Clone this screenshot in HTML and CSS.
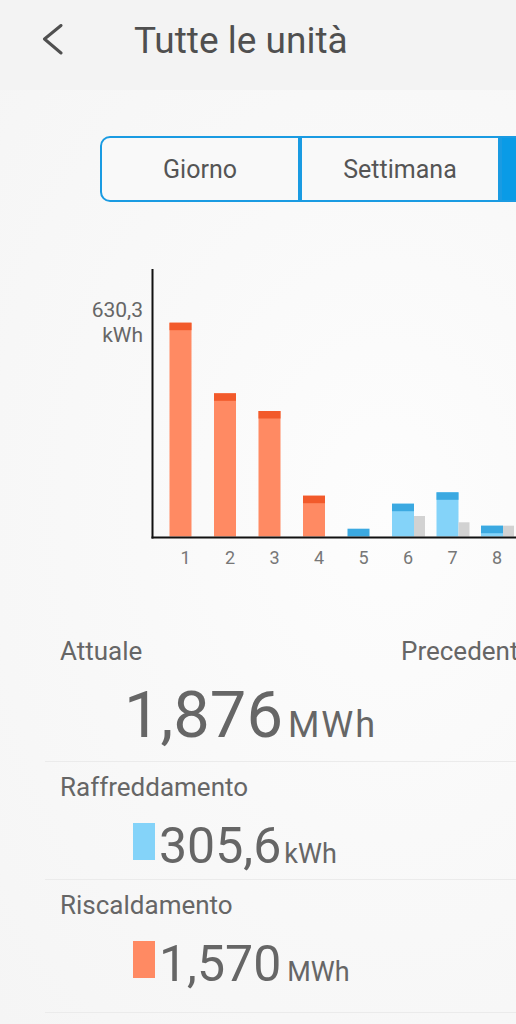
FILE: index.html
```html
<!DOCTYPE html>
<html lang="it">
<head>
  <meta charset="UTF-8" />
  <meta name="viewport" content="width=device-width, initial-scale=1.0"/>
  <title>Tutte le unità</title>
  <link rel="stylesheet" href="styles.css">
</head>
<body>
  <!-- top bar -->
  <header class="top-bar">
    <a href="#" class="back-link">
      <svg width="24" height="32" viewBox="0 0 24 32">
        <polyline points="21,1.5 4.5,15 21,29" fill="none" stroke="#4f4f4f" stroke-width="3" stroke-linecap="round" stroke-linejoin="round"/>
      </svg>
    </a>
    <h1 class="page-title">Tutte le unità</h1>
  </header>

  <main class="content">
    <div class="period-tabs">
      <div class="tab tab-first">Giorno</div>
      <div class="tab">Settimana</div>
      <div class="tab tab-active" title="Mese"></div>
    </div>

    <!-- usage chart -->
    <svg class="usage-chart" width="516" height="320" viewBox="0 260 516 320">
      <text class="axis-label" x="143" y="317" text-anchor="end">630,3</text>
      <text class="axis-label" x="143" y="342" text-anchor="end">kWh</text>

      <rect x="169.5" y="322.7" width="22" height="213.8" fill="#ff8a63"/>
      <rect x="169.5" y="322.7" width="22" height="7.5" fill="#f25a2b"/>
      <rect x="214" y="393.3" width="22" height="143.2" fill="#ff8a63"/>
      <rect x="214" y="393.3" width="22" height="7.5" fill="#f25a2b"/>
      <rect x="258.5" y="411" width="22" height="125.5" fill="#ff8a63"/>
      <rect x="258.5" y="411" width="22" height="7.5" fill="#f25a2b"/>
      <rect x="303" y="495.7" width="22" height="40.8" fill="#ff8a63"/>
      <rect x="303" y="495.7" width="22" height="7.5" fill="#f25a2b"/>

      <rect x="347.5" y="528.7" width="22" height="7.8" fill="#3ba9e1"/>
      <rect x="392" y="503.7" width="22" height="32.8" fill="#84d3f9"/>
      <rect x="392" y="503.7" width="22" height="7.5" fill="#3ba9e1"/>
      <rect x="414" y="516" width="11" height="20.5" fill="#d2d2d2"/>
      <rect x="436.5" y="492.3" width="22" height="44.2" fill="#84d3f9"/>
      <rect x="436.5" y="492.3" width="22" height="7.5" fill="#3ba9e1"/>
      <rect x="458.5" y="522.3" width="11" height="14.2" fill="#d2d2d2"/>
      <rect x="481" y="525.7" width="22" height="10.8" fill="#84d3f9"/>
      <rect x="481" y="525.7" width="22" height="7.5" fill="#3ba9e1"/>
      <rect x="503" y="525.7" width="11" height="10.8" fill="#d2d2d2"/>

      <line x1="152.5" y1="269" x2="152.5" y2="538.5" stroke="#111" stroke-width="2"/>
      <line x1="151.5" y1="537.5" x2="516" y2="537.5" stroke="#111" stroke-width="2"/>

      <text class="day-label" x="185.5" y="564" text-anchor="middle">1</text>
      <text class="day-label" x="230" y="564" text-anchor="middle">2</text>
      <text class="day-label" x="274.5" y="564" text-anchor="middle">3</text>
      <text class="day-label" x="319" y="564" text-anchor="middle">4</text>
      <text class="day-label" x="363.5" y="564" text-anchor="middle">5</text>
      <text class="day-label" x="408" y="564" text-anchor="middle">6</text>
      <text class="day-label" x="452.5" y="564" text-anchor="middle">7</text>
      <text class="day-label" x="497" y="564" text-anchor="middle">8</text>
    </svg>

    <!-- totals -->
    <section class="totals">
      <div class="total-row row-main">
        <div class="col">
          <p class="row-label">Attuale</p>
          <p class="row-value value-main">1,876<span class="unit unit-main">MWh</span></p>
        </div>
        <div class="col">
          <p class="row-label">Precedente</p>
        </div>
      </div>

      <div class="total-row row-cool">
        <div class="col">
          <p class="row-label">Raffreddamento</p>
          <p class="row-value value-part"><span class="swatch swatch-cool"></span>305,6<span class="unit">kWh</span></p>
        </div>
        <div class="col"></div>
      </div>

      <div class="total-row row-heat">
        <div class="col">
          <p class="row-label">Riscaldamento</p>
          <p class="row-value value-part"><span class="swatch swatch-heat"></span>1,570<span class="unit unit-mwh">MWh</span></p>
        </div>
        <div class="col"></div>
      </div>
    </section>
  </main>
</body>
</html>
```

FILE: styles.css
```css
body {
  font-family: Roboto, 'Noto Sans', sans-serif;
  margin: 0;
  width: 516px;
  height: 1024px;
  overflow: hidden;
  background-color: #f8f8f8;
  color: #666;
}
.top-bar {
  display: flex;
  align-items: flex-start;
  height: 90px;
  background-color: #f3f3f3;
}
.back-link {
  display: block;
  margin-top: 24px;
  margin-left: 40px;
  width: 24px;
  height: 32px;
}
.back-link svg {
  display: block;
}
.page-title {
  margin: 22px 0 0 70px;
  font-size: 37px;
  line-height: 37px;
  font-weight: 400;
  color: #4f4f4f;
  white-space: nowrap;
}
.content {
  background: radial-gradient(ellipse at 75% 45%, #fdfdfd 0%, #f9f9f9 45%, #f5f5f5 100%);
  height: 934px;
  overflow: hidden;
}
.period-tabs {
  display: flex;
  margin: 46px 0 0 100px;
  width: 600px;
  height: 66px;
}
.tab {
  box-sizing: border-box;
  flex: 0 0 200px;
  display: flex;
  justify-content: center;
  align-items: center;
  border: 2px solid #1a9be2;
  font-size: 25px;
  color: #555;
  background-color: #f9f9f9;
}
.tab-first {
  border-radius: 10px 0 0 10px;
}
.tab-active {
  background-color: #0a9be6;
  color: white;
}
.usage-chart {
  display: block;
  margin-top: 58px;
}
.axis-label {
  font-family: Roboto, sans-serif;
  font-size: 21px;
  fill: #666;
}
.day-label {
  font-family: Roboto, sans-serif;
  font-size: 18px;
  fill: #777;
}
.totals {
  margin: 55px 0 0 45px;
  width: 682px;
}
.total-row {
  display: grid;
  grid-template-columns: 341px 341px;
  border-bottom: 1px solid #ebebeb;
}
.row-label {
  margin: 0;
  padding-left: 15px;
  font-size: 26px;
  line-height: 32px;
  white-space: nowrap;
}
.row-value {
  margin: 0;
  white-space: nowrap;
}
.value-main {
  margin-top: 13px;
  padding-left: 79px;
  font-size: 65px;
  line-height: 70px;
}
.unit {
  margin-left: 3px;
  font-size: 27px;
  line-height: 1;
}
.unit-main {
  margin-left: 5px;
  font-size: 36px;
  letter-spacing: 2px;
}
.unit-mwh {
  margin-left: 6px;
}
.value-part {
  margin-top: 15px;
  padding-left: 88px;
  font-size: 50px;
  line-height: 56px;
}
.row-main {
  padding-bottom: 11px;
}
.row-cool {
  padding: 9px 0 5px;
}
.row-heat {
  padding: 9px 0 20px;
}
.swatch {
  display: inline-block;
  width: 22px;
  height: 37px;
  margin-right: 4px;
  margin-bottom: 3px;
}
.swatch-cool {
  background-color: #84d3f9;
}
.swatch-heat {
  background-color: #ff8a63;
}
```
